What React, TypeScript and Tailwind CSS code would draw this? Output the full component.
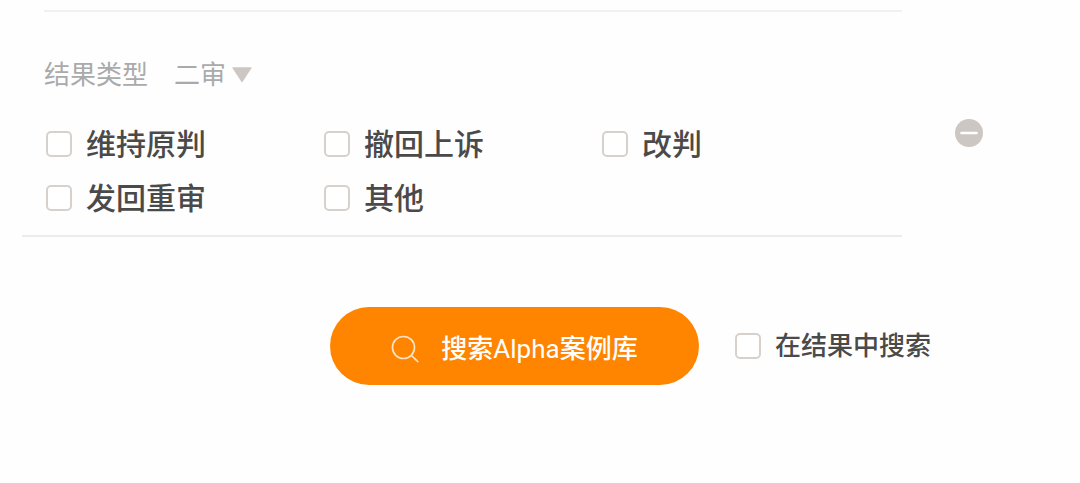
import React, { useState } from 'react';

const TRIALS = ['一审', '二审', '再审'];

const RESULT_TYPES = ['维持原判', '撤回上诉', '改判', '发回重审', '其他'];

const BOX_CLASS =
  'appearance-none shrink-0 w-[26px] h-[26px] rounded-[5px] border-2 border-[#d6d1cd] bg-white checked:border-[#ff8400] checked:bg-[#ff8400] cursor-pointer';

function SearchIcon() {
  return (
    <svg className="w-7 h-7 shrink-0" viewBox="0 0 28 28" fill="none" stroke="#ffe3c4" strokeWidth="1.7" strokeLinecap="round" aria-hidden="true">
      <circle cx="12.5" cy="12.5" r="11" />
      <path d="M20.5 20.5 L26.8 26.6" />
    </svg>
  );
}

export default function App() {
  const [trial, setTrial] = useState('二审');
  const [selected, setSelected] = useState<string[]>([]);
  const [within, setWithin] = useState(false);

  const toggle = (name: string) => {
    setSelected(prev => (prev.includes(name) ? prev.filter(n => n !== name) : [...prev, name]));
  };

  return (
    <div className="min-h-screen bg-[#fefefe] pt-[10px] pb-24 font-[Roboto,'Noto_Sans_CJK_SC',sans-serif] font-medium text-[#4a4a4a]">
      <section className="flex items-start pl-[22px]">
        <div className="flex-1 border-b-2 border-[#ececec] pb-[10px]">
          <div className="ml-[22px] border-t-2 border-[#f1f1f1] pt-[45px]">
            <div className="flex items-center text-[26px] leading-9 font-normal text-[#aaaaaa]">
              <label htmlFor="trial">结果类型</label>
              <div className="ml-[26px] flex items-center gap-[5px]">
                <select
                  id="trial"
                  value={trial}
                  onChange={e => setTrial(e.target.value)}
                  className="appearance-none bg-transparent cursor-pointer outline-none"
                >
                  {TRIALS.map(t => (
                    <option key={t} value={t}>{t}</option>
                  ))}
                </select>
                <svg className="w-5 h-4" viewBox="0 0 20 16" fill="#cdc7c3" aria-hidden="true">
                  <path d="M0.8 0.2 H19.2 Q20 0.2 19.6 1 L10.8 14.6 Q10 15.6 9.2 14.6 L0.4 1 Q0 0.2 0.8 0.2 Z" />
                </svg>
              </div>
            </div>

            <div className="mt-6 ml-[2px] grid grid-cols-[278px_278px_1fr]">
              {RESULT_TYPES.map(name => (
                <label key={name} className="flex h-[54px] items-center gap-[14px] text-[30px] cursor-pointer">
                  <input
                    type="checkbox"
                    checked={selected.includes(name)}
                    onChange={() => toggle(name)}
                    className={BOX_CLASS}
                  />
                  {name}
                </label>
              ))}
            </div>
          </div>
        </div>

        <div className="w-[178px] pt-[109px] pl-[53px]">
          <button type="button" aria-label="删除条件" className="block cursor-pointer">
            <svg className="w-7 h-7" viewBox="0 0 28 28" aria-hidden="true">
              <circle cx="14" cy="14" r="14" fill="#cdc7c3" />
              <path d="M6.5 14 H21.5" stroke="#fff" strokeWidth="2.6" strokeLinecap="round" />
            </svg>
          </button>
        </div>
      </section>

      <div className="mt-[70px] flex items-center pl-[330px] text-[26px]">
        <button
          type="button"
          className="flex h-[78px] w-[369px] items-center justify-center gap-[22px] rounded-full bg-[#ff8400] pt-1.5 text-white cursor-pointer"
        >
          <SearchIcon />
          <span>搜索<span className="font-normal">Alpha</span>案例库</span>
        </button>
        <label className="ml-9 flex items-center gap-[14px] cursor-pointer">
          <input type="checkbox" checked={within} onChange={e => setWithin(e.target.checked)} className={BOX_CLASS} />
          在结果中搜索
        </label>
      </div>
    </div>
  );
}
